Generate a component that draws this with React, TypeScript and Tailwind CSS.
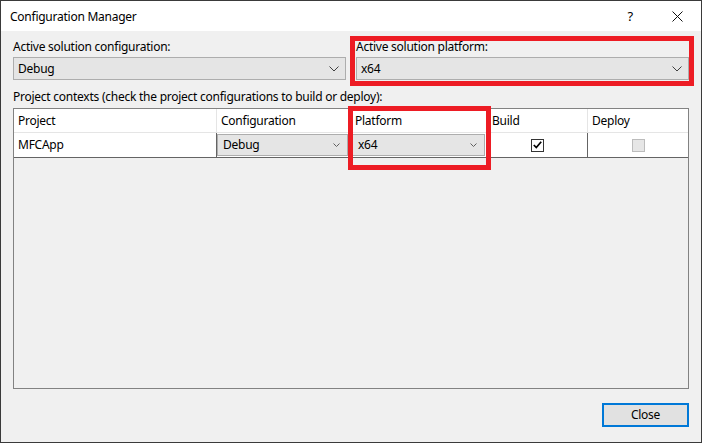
import React from "react";

const font = { fontFamily: '"Noto Sans", "Open Sans", Arial, sans-serif' };

// small chevron used by the combo boxes
const Chevron = ({ small }: { small?: boolean }) => (
  <svg
    width={small ? 7 : 10}
    height={small ? 4 : 6}
    viewBox={small ? "0 0 7 4" : "0 0 10 6"}
    className="shrink-0"
  >
    {small ? (
      <path d="M0.5 0.5 L3.5 3.5 L6.5 0.5" fill="none" stroke="#606060" strokeWidth="1" />
    ) : (
      <path d="M0.5 0.5 L5 5 L9.5 0.5" fill="none" stroke="#404040" strokeWidth="1" />
    )}
  </svg>
);

const Combo = ({ value }: { value: string }) => (
  <div className="flex h-[23px] items-center justify-between border border-[#adadad] bg-[#e5e5e5] pl-[4px] pr-[6px] text-[12px] text-black">
    <span>{value}</span>
    <Chevron />
  </div>
);

const CellCombo = ({ value }: { value: string }) => (
  <div className="flex h-full items-center justify-between border border-[#adadad] bg-[#e5e5e5] pl-[5px] pr-[7px] text-[12px] text-black">
    <span>{value}</span>
    <Chevron small />
  </div>
);

const columns = [
  { name: "Project", width: "w-[203px]" },
  { name: "Configuration", width: "w-[134px]" },
  { name: "Platform", width: "w-[137px]" },
  { name: "Build", width: "w-[100px]" },
  { name: "Deploy", width: "w-[100px]" },
];

export default function App() {
  return (
    <div
      className="relative flex h-[443px] w-[702px] flex-col overflow-hidden border border-[#3a3a3a] bg-[#f0f0f0] tracking-[-0.25px] text-black"
      style={font}
    >
      {/* Title bar */}
      <div className="flex h-[30px] shrink-0 items-center bg-white pl-[9px] pt-px">
        <span className="text-[12px]">Configuration Manager</span>
        <div className="ml-auto flex items-center">
          <span className="mr-[39px] text-[13px]">?</span>
          <svg width="11" height="11" viewBox="0 0 11 11" className="mr-[18px]">
            <path d="M0.5 0.5 L10.5 10.5 M10.5 0.5 L0.5 10.5" stroke="#111" strokeWidth="1" />
          </svg>
        </div>
      </div>

      {/* Body */}
      <div className="flex flex-1 flex-col px-[12px] pt-[8px]">
        <div className="grid grid-cols-2 gap-x-[10px]">
          <div className="flex flex-col gap-[2px]">
            <span className="h-[16px] text-[12px] leading-[16px]">Active solution configuration:</span>
            <Combo value="Debug" />
          </div>
          <div className="flex flex-col gap-[2px]">
            <span className="h-[16px] text-[12px] leading-[16px]">Active solution platform:</span>
            <Combo value="x64" />
          </div>
        </div>

        <span className="mt-[9px] h-[16px] text-[12px] leading-[16px]">
          Project contexts (check the project configurations to build or deploy):
        </span>

        {/* Grid */}
        <div className="mt-[3px] flex h-[281px] flex-col border border-[#828282] bg-[#f0f0f0]">
          <div className="flex h-[24px] bg-white">
            {columns.map((c, i) => (
              <div
                key={c.name}
                className={`${c.width} flex items-center border-b border-[#e5e5e5] pl-[4px] text-[12px] ${
                  i < columns.length - 1 ? "border-r border-r-[#e5e5e5]" : ""
                }`}
              >
                {c.name}
              </div>
            ))}
          </div>
          <div className="flex h-[25px] border-b border-[#646464] bg-white">
            <div className="flex w-[203px] items-center border-r border-[#646464] pl-[4px] text-[12px]">
              MFCApp
            </div>
            <div className="w-[134px] border-r border-[#646464] py-px pr-[2px]">
              <CellCombo value="Debug" />
            </div>
            <div className="w-[137px] border-r border-[#646464] py-px pl-[1px] pr-[2px]">
              <CellCombo value="x64" />
            </div>
            <div className="flex w-[100px] items-center justify-center border-r border-[#646464]">
              <div className="flex h-[13px] w-[13px] items-center justify-center border border-[#333] bg-white">
                <svg width="9" height="8" viewBox="0 0 9 8">
                  <path d="M0.8 4 L3.3 6.6 L8.2 0.8" fill="none" stroke="#000" strokeWidth="1.7" />
                </svg>
              </div>
            </div>
            <div className="flex w-[100px] items-center justify-center">
              <div className="h-[13px] w-[13px] border border-[#bcbcbc] bg-[#e6e6e6]" />
            </div>
          </div>
        </div>

        <div className="mt-[14px] flex justify-end">
          <button className="flex h-[24px] w-[87px] items-center justify-center border-2 border-[#0078d7] bg-[#e1e1e1] text-[12px]">
            Close
          </button>
        </div>
      </div>

      {/* Red annotation boxes */}
      <div className="pointer-events-none absolute left-[349px] top-[35px] h-[50px] w-[344px] border-[5px] border-[#ed1c24]" />
      <div className="pointer-events-none absolute left-[347px] top-[105px] h-[64px] w-[143px] border-[5px] border-[#ed1c24]" />
    </div>
  );
}
